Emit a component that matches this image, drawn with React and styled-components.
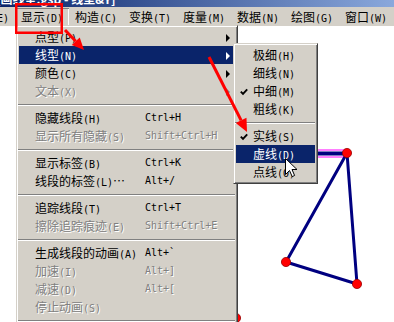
import React from 'react'
import styled, { createGlobalStyle } from 'styled-components'

const GlobalStyle = createGlobalStyle`
  html, body {
    margin: 0;
    padding: 0;
    background: #fff;
  }
`

const Screen = styled.div`
  position: relative;
  width: 394px;
  height: 322px;
  overflow: hidden;
  display: flex;
  flex-direction: column;
  background: #fff;
  font-family: "Noto Sans CJK SC", sans-serif;
  font-size: 12px;
`

const TitleBar = styled.div`
  flex: none;
  height: 7px;
  overflow: hidden;
  background: linear-gradient(to right, #0a246a, #8aa8dc);
  color: #fff;
  white-space: nowrap;
`

const TitleText = styled.div`
  margin: -7px 0 0 -4px;
  line-height: 12px;
  font-weight: bold;
`

const MenuBar = styled.div`
  flex: none;
  height: 19px;
  display: flex;
  background: #d4d0c8;
  white-space: nowrap;
`

const BarItem = styled.div`
  flex: none;
  box-sizing: border-box;
  width: 54px;
  height: 18px;
  margin-top: 1px;
  padding-left: 6px;
  line-height: 18px;
  color: #000;
  box-shadow: ${p => (p.$pressed ? 'inset 1px 1px #808080, inset -1px -1px #fff' : 'none')};

  &:first-child {
    margin-left: -39px;
  }
`

const Key = styled.span`
  font-family: "DejaVu Sans Mono", monospace;
  font-size: 10px;
`

const Canvas = styled.div`
  flex: 1;
  background: #fff;

  svg {
    display: block;
  }
`

const Menu = styled.div`
  position: absolute;
  left: ${p => p.$left}px;
  top: ${p => p.$top}px;
  width: ${p => p.$width}px;
  box-sizing: border-box;
  padding: 2px;
  background: #d4d0c8;
  border: 1px solid;
  border-color: #d4d0c8 #404040 #404040 #d4d0c8;
  box-shadow: inset 1px 1px #fff, inset -1px -1px #808080;
`

const Item = styled.div`
  display: grid;
  grid-template-columns: ${p => p.$checkW}px ${p => p.$labelW}px 1fr 12px;
  height: 18px;
  line-height: 18px;
  white-space: nowrap;
  background: ${p => (p.$active ? '#0a246a' : 'transparent')};
  color: ${p => (p.$active ? '#fff' : p.$disabled ? '#808080' : '#000')};
  text-shadow: ${p => (p.$disabled ? '1px 1px 0 #fff' : 'none')};
`

const Check = styled.span`
  display: flex;
  align-items: center;
  padding-left: 4px;

  svg {
    width: 8px;
    height: 8px;
  }
`

const Shortcut = styled.span`
  font-family: "DejaVu Sans Mono", monospace;
  font-size: 10px;
`

const Arrow = styled.span`
  align-self: center;
  justify-self: start;
  margin-left: 3px;
  width: 0;
  height: 0;
  border-left: 4px solid currentColor;
  border-top: 4px solid transparent;
  border-bottom: 4px solid transparent;
`

const Separator = styled.div`
  height: 9px;
  display: flex;
  align-items: center;
  margin-left: -1px;

  &::before {
    content: '';
    flex: 1;
    border-top: 1px solid #808080;
    border-bottom: 1px solid #fff;
  }
`

const Overlay = styled.svg`
  position: absolute;
  left: 0;
  top: 0;
  pointer-events: none;
`

const barItems = [
  ['编辑', 'E'],
  ['显示', 'D'],
  ['构造', 'C'],
  ['变换', 'T'],
  ['度量', 'M'],
  ['数据', 'N'],
  ['绘图', 'G'],
  ['窗口', 'W'],
]

const displayItems = [
  { label: '点型', key: 'P', sub: true },
  { label: '线型', key: 'N', sub: true, active: true },
  { label: '颜色', key: 'C', sub: true },
  { label: '文本', key: 'X', sub: true, disabled: true },
  'sep',
  { label: '隐藏线段', key: 'H', shortcut: 'Ctrl+H' },
  { label: '显示所有隐藏', key: 'S', shortcut: 'Shift+Ctrl+H', disabled: true },
  'sep',
  { label: '显示标签', key: 'B', shortcut: 'Ctrl+K' },
  { label: '线段的标签', key: 'L', tail: '…', shortcut: 'Alt+/' },
  'sep',
  { label: '追踪线段', key: 'T', shortcut: 'Ctrl+T' },
  { label: '擦除追踪痕迹', key: 'E', shortcut: 'Shift+Ctrl+E', disabled: true },
  'sep',
  { label: '生成线段的动画', key: 'A', shortcut: 'Alt+`' },
  { label: '加速', key: 'I', shortcut: 'Alt+]', disabled: true },
  { label: '减速', key: 'D', shortcut: 'Alt+[', disabled: true },
  { label: '停止动画', key: 'S', disabled: true },
  'sep',
]

const lineItems = [
  { label: '极细', key: 'H' },
  { label: '细线', key: 'N' },
  { label: '中细', key: 'M', checked: true },
  { label: '粗线', key: 'K' },
  'sep',
  { label: '实线', key: 'S', checked: true },
  { label: '虚线', key: 'D', active: true },
  { label: '点线', key: 'O' },
]

const CheckMark = () => (
  <svg viewBox="0 0 8 8">
    <path d="M0.8 3.6 L3 5.9 L7.2 1.4" fill="none" stroke="currentColor" strokeWidth="1.9" />
  </svg>
)

const PopupMenu = ({ items, left, top, width, checkW, labelW }) => (
  <Menu $left={left} $top={top} $width={width}>
    {items.map((it, i) =>
      it === 'sep' ? (
        <Separator key={i} />
      ) : (
        <Item key={i} $active={it.active} $disabled={it.disabled} $checkW={checkW} $labelW={labelW}>
          <Check>{it.checked && <CheckMark />}</Check>
          <span>
            {it.label}
            <Key>({it.key})</Key>
            {it.tail}
          </span>
          <Shortcut>{it.shortcut}</Shortcut>
          {it.sub ? <Arrow /> : <span />}
        </Item>
      )
    )}
  </Menu>
)

// arrow head polygon for an annotation arrow ending at (x2, y2)
const head = (x1, y1, x2, y2, len, hw) => {
  const d = Math.hypot(x2 - x1, y2 - y1)
  const ux = (x2 - x1) / d
  const uy = (y2 - y1) / d
  const bx = x2 - ux * len
  const by = y2 - uy * len
  return {
    base: [bx, by],
    points: `${x2},${y2} ${bx - uy * hw},${by + ux * hw} ${bx + uy * hw},${by - ux * hw}`,
  }
}

const RedArrow = ({ x1, y1, x2, y2, len, hw }) => {
  const h = head(x1, y1, x2, y2, len, hw)
  return (
    <g>
      <line x1={x1} y1={y1} x2={h.base[0]} y2={h.base[1]} stroke="#f00" strokeWidth="3" />
      <polygon points={h.points} fill="#f00" />
    </g>
  )
}

const Point = ({ x, y }) => <circle cx={x} cy={y} r="4.6" fill="#f00" stroke="#900" strokeWidth="0.8" />

export default function App() {
  return (
    <Screen>
      <GlobalStyle />
      <TitleBar>
        <TitleText>[画线型.gsp - 线型&amp;Y]</TitleText>
      </TitleBar>
      <MenuBar>
        {barItems.map(([label, key]) => (
          <BarItem key={label} $pressed={label === '显示'}>
            {label}
            <Key>({key})</Key>
          </BarItem>
        ))}
      </MenuBar>
      <Canvas>
        <svg width="394" height="296" viewBox="0 26 394 296">
          <line x1="250" y1="153.5" x2="347" y2="153.5" stroke="#ff00ff" strokeWidth="8" />
          <line x1="250" y1="153.5" x2="347" y2="153.5" stroke="#fff" strokeWidth="6" />
          <line x1="250" y1="153.5" x2="347" y2="153.5" stroke="#000080" strokeWidth="4" />
          <g stroke="#000080" strokeWidth="3" strokeLinecap="round">
            <line x1="347" y1="153" x2="286" y2="262" />
            <line x1="286" y1="262" x2="357" y2="284" />
            <line x1="347" y1="153" x2="357" y2="284" />
          </g>
          <Point x={347} y={153} />
          <Point x={286} y={262} />
          <Point x={357} y={284} />
          <Point x={236} y={318} />
        </svg>
      </Canvas>

      <PopupMenu items={displayItems} left={16} top={25} width={222} checkW={16} labelW={110} />
      <PopupMenu items={lineItems} left={233} top={43} width={85} checkW={17} labelW={60} />

      <Overlay width="394" height="322" viewBox="0 0 394 322">
        <rect x="16.25" y="4.25" width="45.5" height="28.5" fill="none" stroke="#f00" strokeWidth="2.5" />
        <RedArrow x1={65} y1={30} x2={84} y2={50} len={12} hw={5.5} />
        <RedArrow x1={209} y1={57} x2={247} y2={132} len={13} hw={6} />
        <path
          transform="translate(285 158)"
          d="M0.5 0.5 V16.5 L4.5 12.5 L7.2 18.6 L9.6 17.5 L7 11.5 H12 Z"
          fill="#fff"
          stroke="#000"
          strokeWidth="1"
          strokeLinejoin="miter"
        />
      </Overlay>
    </Screen>
  )
}
